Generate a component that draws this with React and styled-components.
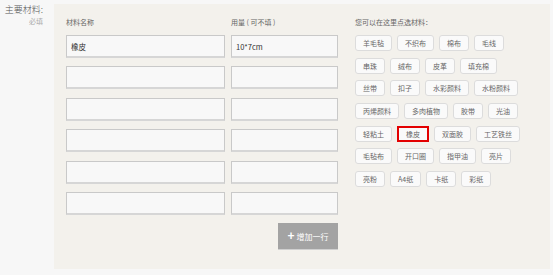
import styled, { createGlobalStyle } from "styled-components";

const GlobalStyle = createGlobalStyle`
	html, body {
		margin: 0;
		padding: 0;
		background: #f7f7f7;
		font-family: "Noto Sans CJK SC", "Liberation Sans", sans-serif;
	}
	* {
		box-sizing: border-box;
	}
`;

const materialRows = [
	["10*7cm", "橡皮"],
	["", ""],
	["", ""],
	["", ""],
	["", ""],
	["", ""],
];

const tagRows = [
	["羊毛毡", "不织布", "棉布", "毛线"],
	["串珠", "绒布", "皮革", "填充棉"],
	["丝带", "扣子", "水彩颜料", "水粉颜料"],
	["丙烯颜料", "多肉植物", "胶带", "光油"],
	["轻粘土", "橡皮", "双面胶", "工艺铁丝"],
	["毛毡布", "开口圈", "指甲油", "亮片"],
	["亮粉", "A4纸", "卡纸", "彩纸"],
];

const App = () => {
	return (
		<>
			<GlobalStyle />
			<Page>
				<Label>
					<LabelTitle>主要材料:</LabelTitle>
					<LabelHint>必填</LabelHint>
				</Label>
				<Panel>
					<Form>
						<HeaderRow>
							<ColTitle>材料名称</ColTitle>
							<ColTitle>用量 ( 可不填 )</ColTitle>
						</HeaderRow>
						{materialRows.map(([amount, name], index) => (
							<InputRow key={index}>
								<Field defaultValue={name} />
								<Field defaultValue={amount} />
							</InputRow>
						))}
						<ButtonRow>
							<AddButton>
								<Plus>+</Plus>增加一行
							</AddButton>
						</ButtonRow>
					</Form>
					<Picker>
						<ColTitle>您可以在这里点选材料：</ColTitle>
						<Tags>
							{tagRows.map((row, index) => (
								<TagRow key={index}>
									{row.map((tag) => (
										<Tag key={tag} $selected={tag === "橡皮"}>
											{tag}
										</Tag>
									))}
								</TagRow>
							))}
						</Tags>
					</Picker>
				</Panel>
			</Page>
		</>
	);
};

const Page = styled.div`
	display: flex;
	align-items: flex-start;
	width: 553px;
	height: 275px;
	padding-top: 4px;
`;

const Label = styled.div`
	width: 54px;
	padding-right: 11px;
	display: flex;
	flex-direction: column;
	align-items: flex-end;
`;

const LabelTitle = styled.div`
	font-size: 9px;
	line-height: 11px;
	font-weight: 300;
	color: #555;
`;

const LabelHint = styled.div`
	margin-top: 2px;
	font-size: 7px;
	line-height: 9px;
	color: #aaa;
`;

const Panel = styled.div`
	display: flex;
	width: 496px;
	height: 265px;
	padding: 11px 12px 0;
	background: #f3f1ec;
`;

const Form = styled.div`
	width: 272px;
`;

const HeaderRow = styled.div`
	display: grid;
	grid-template-columns: 165px 107px;
	margin-bottom: 8px;
`;

const ColTitle = styled.div`
	font-size: 7px;
	line-height: 10px;
	color: #666;
	margin-top: 2px;
`;

const InputRow = styled.div`
	display: grid;
	grid-template-columns: 159px 107px;
	gap: 6px;
	margin-bottom: 8.4px;
`;

const Field = styled.input`
	height: 23px;
	width: 100%;
	margin: 0;
	padding: 0 4px;
	border: 1px solid #c9c9c9;
	border-bottom: 2px solid #d6d6d6;
	background: #f8f8f8;
	font-family: "Noto Sans CJK SC", "Liberation Sans", sans-serif;
	font-size: 7.5px;
	color: #333;
	outline: none;
`;

const ButtonRow = styled.div`
	display: flex;
	justify-content: flex-end;
	margin-top: 0.6px;
`;

const AddButton = styled.button`
	display: flex;
	align-items: center;
	justify-content: center;
	width: 60px;
	height: 27px;
	padding: 0;
	border: none;
	border-bottom: 1px solid #d0d0d0;
	background: #a3a3a3;
	color: #fff;
	font-family: "Noto Sans CJK SC", "Liberation Sans", sans-serif;
	font-size: 8px;
	cursor: pointer;
`;

const Plus = styled.span`
	font-family: "Liberation Sans", sans-serif;
	font-size: 12px;
	font-weight: 700;
	line-height: 1;
	margin-right: 2px;
`;

const Picker = styled.div`
	margin-left: 17px;
	flex: 1;
`;

const Tags = styled.div`
	margin-top: 8px;
	display: flex;
	flex-direction: column;
	gap: 6.67px;
`;

const TagRow = styled.div`
	display: flex;
	gap: 5px;
`;

const Tag = styled.div`
	display: flex;
	align-items: center;
	height: 16px;
	padding: 0 7px;
	border: ${(p) => (p.$selected ? "2px solid #e30000" : "1px solid #dcdcdc")};
	border-radius: ${(p) => (p.$selected ? "0" : "3px")};
	background: #fafafa;
	font-size: 7px;
	color: #666;
	white-space: nowrap;
`;

export default App;
